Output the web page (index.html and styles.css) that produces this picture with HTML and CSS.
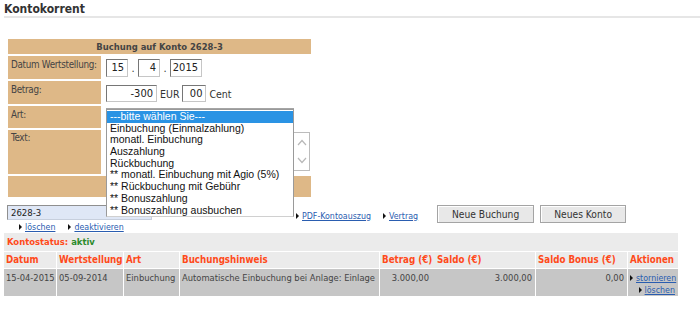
FILE: index.html
```html
<!DOCTYPE html>
<html lang="de">
<head>
  <meta charset="UTF-8" />
  <title>Kontokorrent</title>
  <link rel="stylesheet" href="styles.css">
</head>
<body>
  <div class="page">
    <h1 class="title">Kontokorrent</h1>

    <table class="booking">
      <colgroup><col class="c-lbl"><col class="c-val"></colgroup>
      <tr class="r-head"><th colspan="2">Buchung auf Konto 2628-3</th></tr>
      <tr class="r-date">
        <td class="lbl">Datum Wertstellung:</td>
        <td class="val">
          <div class="fields">
            <span class="box w-day">15</span><span class="dot">.</span><span class="box w-day">4</span><span class="dot">.</span><span class="box w-year">2015</span>
          </div>
        </td>
      </tr>
      <tr class="r-amount">
        <td class="lbl">Betrag:</td>
        <td class="val">
          <div class="fields">
            <span class="box w-amount">-300</span><span class="unit">EUR</span><span class="box w-cent">00</span><span class="unit">Cent</span>
          </div>
        </td>
      </tr>
      <tr class="r-type">
        <td class="lbl">Art:</td>
        <td class="val">
          <div class="select-wrap">
            <div class="select-closed"></div>
            <!-- aufgeklappte Auswahlliste -->
            <ul class="options">
              <li class="selected">---bitte wählen Sie---</li>
              <li>Einbuchung (Einmalzahlung)</li>
              <li>monatl. Einbuchung</li>
              <li>Auszahlung</li>
              <li>Rückbuchung</li>
              <li>** monatl. Einbuchung mit Agio (5%)</li>
              <li>** Rückbuchung mit Gebühr</li>
              <li>** Bonuszahlung</li>
              <li>** Bonuszahlung ausbuchen</li>
            </ul>
          </div>
        </td>
      </tr>
      <tr class="r-text">
        <td class="lbl">Text:</td>
        <td class="val">
          <div class="textarea">
            <div class="scroll">
              <svg width="12" height="37" viewBox="0 0 12 37"><path d="M2 12 L6 7.5 L10 12" fill="none" stroke="#b8b8b8" stroke-width="1.2"/><path d="M2 25 L6 29.5 L10 25" fill="none" stroke="#b8b8b8" stroke-width="1.2"/></svg>
            </div>
          </div>
        </td>
      </tr>
      <tr class="r-foot"><td colspan="2"></td></tr>
    </table>

    <div class="toolbar">
      <div class="konto-select">2628-3</div>
      <a class="link arrow pdf" href="#">PDF-Kontoauszug</a>
      <a class="link arrow vertrag" href="#">Vertrag</a>
      <button class="btn first">Neue Buchung</button>
      <button class="btn">Neues Konto</button>
    </div>
    <div class="sublinks">
      <a class="link arrow" href="#">löschen</a>
      <a class="link arrow" href="#">deaktivieren</a>
    </div>

    <div class="status">Kontostatus: <span class="aktiv">aktiv</span></div>

    <table class="entries">
      <colgroup>
        <col class="c1"><col class="c2"><col class="c3"><col class="c4">
        <col class="c5"><col class="c6"><col class="c7"><col class="c8">
      </colgroup>
      <tr>
        <th>Datum</th>
        <th class="sep">Wertstellung</th>
        <th class="sep">Art</th>
        <th class="sep">Buchungshinweis</th>
        <th class="sep">Betrag (€)</th>
        <th>Saldo (€)</th>
        <th class="sep">Saldo Bonus (€)</th>
        <th class="sep">Aktionen</th>
      </tr>
      <tr>
        <td>15-04-2015</td>
        <td class="sep">05-09-2014</td>
        <td class="sep">Einbuchung</td>
        <td class="sep">Automatische Einbuchung bei Anlage: Einlage</td>
        <td class="sep num betrag">3.000,00</td>
        <td class="num">3.000,00</td>
        <td class="sep num">0,00</td>
        <td class="sep actions">
          <a class="link arrow" href="#">stornieren</a><br>
          <a class="link arrow" href="#">löschen</a>
        </td>
      </tr>
    </table>
  </div>
</body>
</html>
```

FILE: styles.css
```css
body { margin: 0; background: #fff; font-family: "DejaVu Sans Condensed", "DejaVu Sans", sans-serif; font-stretch: condensed; font-size: 10px; color: #333; }
.page { padding: 0 0 0 4px; }

.title { margin: 0; padding-top: 2px; height: 14px; font-size: 12px; line-height: 14px; color: #333; border-bottom: 2px solid #e6e6e6; }

/* Buchungsformular */
.booking { margin: 19px 0 0 2px; border-spacing: 2px; width: 307px; table-layout: fixed; }
.c-lbl { width: 93px; }
.c-val { width: 208px; }
.booking th, .booking td { background: #deb887; padding: 0; }
.booking th { height: 15px; line-height: 15px; font-size: 9.4px; font-weight: bold; color: #444; text-align: center; }
.booking .lbl { vertical-align: top; padding-left: 3px; font-size: 9.8px; line-height: 18px; letter-spacing: -0.3px; color: #444; white-space: nowrap; overflow: hidden; }
.booking .val { background: #fff; vertical-align: top; padding-left: 3px; }
.r-date td { height: 23px; }
.r-amount td { height: 23px; }
.r-type td { height: 22px; }
.r-text td { height: 44px; }
.r-text .lbl { line-height: 15px; }
.r-foot td { height: 21px; }

.fields { display: flex; align-items: flex-start; white-space: nowrap; }
.r-date .fields { margin-top: 3px; }
.r-amount .fields { margin-top: 4px; }
.box { display: block; box-sizing: border-box; height: 18px; line-height: 16px; border: 1px solid #8a8a8a; border-color: #767676 #c6c6c6 #c6c6c6 #767676; text-align: right; padding-right: 3px; font-size: 11px; color: #222; }
.r-amount .box { height: 17px; line-height: 15px; }
.w-day { width: 22px; }
.w-year { width: 32px; }
.w-amount { width: 51px; }
.w-cent { width: 24px; }
.dot { width: 10px; text-align: center; line-height: 19px; font-size: 11px; }
.unit { line-height: 19px; padding: 0 3px; font-size: 10.5px; }

.select-wrap { position: relative; margin-top: 2px; }
.select-closed { width: 188px; height: 16px; box-sizing: border-box; border: 1px solid #a5a5a5; }
.options { position: absolute; left: 0; top: 1px; z-index: 2; margin: 0; padding: 1px 0 0; list-style: none; width: 188px; box-sizing: border-box; background: #fff; border: 1px solid #9a9a9a; border-bottom-color: #d0d0d0; font-family: "Liberation Sans", Arial, sans-serif; font-stretch: normal; font-size: 10.5px; color: #111; }
.options li { height: 11.7px; line-height: 11.7px; padding-left: 3px; }
.options li.selected { background: #2a93e4; color: #fff; }

.textarea { width: 204px; height: 39px; box-sizing: border-box; border: 1px solid #bcbcbc; margin-top: 2px; display: flex; justify-content: flex-end; }
.scroll { width: 14px; display: flex; align-items: center; justify-content: center; }

/* Kontoauswahl und Aktionen */
.toolbar { display: flex; align-items: flex-start; margin-top: 6px; height: 17px; }
.konto-select { box-sizing: border-box; width: 145px; height: 15px; margin-left: 3px; padding-left: 3px; line-height: 13px; font-size: 9.5px; color: #222; background: #dfe7f6; border: 1px solid #9aa6b8; border-color: #8f8f8f #c7cfdd #c7cfdd #8f8f8f; }
.link { color: #2a5db0; font-size: 8.8px; text-decoration: underline; }
.arrow::before { content: ""; display: inline-block; border-left: 3px solid #111; border-top: 3px solid transparent; border-bottom: 3px solid transparent; margin-right: 3px; vertical-align: 0; }
.toolbar .link { line-height: 12px; margin-top: 5px; }
.pdf { margin-left: 144px; }
.vertrag { margin-left: 12px; }
.btn { height: 18px; padding: 0; font-family: inherit; font-stretch: condensed; font-size: 10.2px; color: #333; background: #e8e8e8; border: 1px solid #a4a4a4; box-shadow: inset 1px 1px #fff; }
.btn.first { width: 97px; margin-left: 19px; }
.btn + .btn { width: 86px; margin-left: 6px; }

.sublinks { display: flex; gap: 13px; padding-left: 15px; height: 11px; line-height: 11px; }

.status { width: 674px; height: 18px; line-height: 18px; padding-left: 3px; box-sizing: border-box; background: #ebebeb; color: #ff4a1a; font-weight: bold; font-size: 9.4px; }
.aktiv { color: #2b8a2b; }

/* Buchungstabelle */
.entries { width: 674px; table-layout: fixed; border-collapse: separate; border-spacing: 0; }
.c1 { width: 52px; }
.c2 { width: 67px; }
.c3 { width: 56px; }
.c4 { width: 200px; }
.c5 { width: 56px; }
.c6 { width: 100px; }
.c7 { width: 92px; }
.c8 { width: 51px; }
.entries th, .entries td { box-sizing: border-box; padding: 0 2px; border-top: 1px solid #fff; text-align: left; vertical-align: top; white-space: nowrap; overflow: hidden; }
.entries th { height: 17px; line-height: 16px; background: #ebebeb; color: #ff4a1a; font-weight: bold; font-size: 9.7px; }
.entries td { height: 27px; padding-top: 3px; background: #c6c6c6; color: #444; font-size: 9.3px; line-height: 12px; }
.entries .sep { border-left: 1px solid #fff; }
.entries .num { text-align: right; padding-right: 3px; }
.entries .betrag { padding-right: 6px; }
.entries .actions { text-align: right; padding-right: 3px; line-height: 12px; }
```
